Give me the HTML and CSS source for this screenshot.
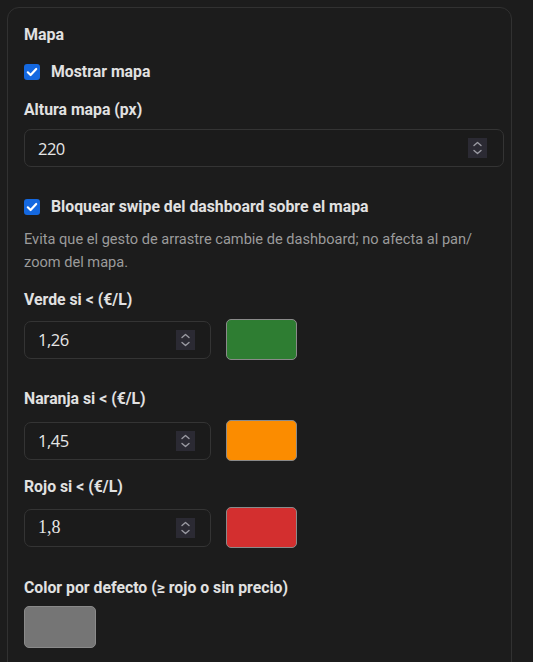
FILE: index.html
```html
<!DOCTYPE html>
<html lang="es">
<head>
<meta charset="utf-8">
<link rel="stylesheet" href="styles.css">
</head>
<body>
<div class="card">
  <div class="title">Mapa</div>

  <label class="check-row">
    <span class="checkbox"><svg viewBox="0 0 16 16" width="16" height="16"><path d="M3.8 8.3 L6.6 11 L12.2 5" fill="none" stroke="#fff" stroke-width="2.2" stroke-linecap="round" stroke-linejoin="round"/></svg></span>
    <span class="check-label">Mostrar mapa</span>
  </label>

  <div class="field f-altura">
    <div class="label">Altura mapa (px)</div>
    <div class="num wide"><span class="num-val">220</span><span class="spin"><svg viewBox="0 0 19 20" width="19" height="20"><path d="M6 7.5 L9.5 4.5 L13 7.5 M6 12.5 L9.5 15.5 L13 12.5" fill="none" stroke="#9a9aa2" stroke-width="1.4" stroke-linecap="round" stroke-linejoin="round"/></svg></span></div>
  </div>

  <label class="check-row check-2">
    <span class="checkbox"><svg viewBox="0 0 16 16" width="16" height="16"><path d="M3.8 8.3 L6.6 11 L12.2 5" fill="none" stroke="#fff" stroke-width="2.2" stroke-linecap="round" stroke-linejoin="round"/></svg></span>
    <span class="check-label">Bloquear swipe del dashboard sobre el mapa</span>
  </label>
  <p class="desc">Evita que el gesto de arrastre cambie de dashboard; no afecta al pan/ zoom del mapa.</p>

  <div class="field f-verde">
    <div class="label">Verde si &lt; (€/L)</div>
    <div class="row">
      <div class="num short"><span class="num-val">1,26</span><span class="spin"><svg viewBox="0 0 19 20" width="19" height="20"><path d="M6 7.5 L9.5 4.5 L13 7.5 M6 12.5 L9.5 15.5 L13 12.5" fill="none" stroke="#9a9aa2" stroke-width="1.4" stroke-linecap="round" stroke-linejoin="round"/></svg></span></div>
      <div class="swatch green"></div>
    </div>
  </div>

  <div class="field f-naranja">
    <div class="label">Naranja si &lt; (€/L)</div>
    <div class="row">
      <div class="num short"><span class="num-val">1,45</span><span class="spin"><svg viewBox="0 0 19 20" width="19" height="20"><path d="M6 7.5 L9.5 4.5 L13 7.5 M6 12.5 L9.5 15.5 L13 12.5" fill="none" stroke="#9a9aa2" stroke-width="1.4" stroke-linecap="round" stroke-linejoin="round"/></svg></span></div>
      <div class="swatch orange"></div>
    </div>
  </div>

  <div class="field f-rojo">
    <div class="label">Rojo si &lt; (€/L)</div>
    <div class="row">
      <div class="num short"><span class="num-val serif">1,8</span><span class="spin"><svg viewBox="0 0 19 20" width="19" height="20"><path d="M6 7.5 L9.5 4.5 L13 7.5 M6 12.5 L9.5 15.5 L13 12.5" fill="none" stroke="#9a9aa2" stroke-width="1.4" stroke-linecap="round" stroke-linejoin="round"/></svg></span></div>
      <div class="swatch red"></div>
    </div>
  </div>

  <div class="field f-defecto">
    <div class="label">Color por defecto (≥ rojo o sin precio)</div>
    <div class="row">
      <div class="swatch grey"></div>
    </div>
  </div>
</div>
</body>
</html>
```
FILE: styles.css
```css
html, body {
  margin: 0;
  padding: 0;
  background: #1c1c1c;
  height: 100%;
  overflow: hidden;
}
body {
  padding: 7px;
  font-family: Roboto, "Liberation Sans", sans-serif;
  color: #e1e1e1;
}
.card {
  min-height: 700px;
  border: 1px solid #313131;
  border-radius: 12px;
  padding: 16px 6px 16px 16px;
  box-sizing: border-box;
  width: 505px;
}
.title {
  font-size: 16px;
  font-weight: 700;
  line-height: 22px;
  margin-bottom: 16px;
}
.check-row {
  display: flex;
  align-items: center;
  gap: 11px;
  height: 20px;
}
.checkbox {
  width: 16px;
  height: 16px;
  border-radius: 3px;
  background: #1468e0;
  display: flex;
}
.check-label,
.label {
  font-size: 15.8px;
  font-weight: 700;
  line-height: 20px;
}
.field .label { margin-bottom: 9px; }
.f-altura { margin-top: 18px; }
.check-2 { margin-top: 30px; }
.desc {
  margin: 11px 0 0;
  font-size: 14.6px;
  line-height: 23px;
  color: #9b9b9b;
}
.f-verde { margin-top: 16px; }
.f-verde .label { margin-bottom: 9px; }
.f-naranja { margin-top: 29px; }
.f-naranja .label { margin-bottom: 11px; }
.f-rojo { margin-top: 16px; }
.f-rojo .label { margin-bottom: 10px; }
.f-defecto { margin-top: 30px; }
.f-defecto .label { margin-bottom: 8px; }
.row {
  display: flex;
  align-items: center;
  gap: 15px;
}
.num {
  height: 38px;
  border: 1px solid #343434;
  border-radius: 7px;
  background: #1b1b1b;
  box-sizing: border-box;
  display: flex;
  align-items: center;
  justify-content: space-between;
  padding: 0 15px 0 13px;
}
.num.wide { width: 480px; padding-right: 16px; }
.num.short { width: 187px; }
.num-val {
  font-family: "Open Sans", sans-serif;
  font-size: 16.5px;
  color: #e6e6e6;
  letter-spacing: -0.5px;
}
.num-val.serif {
  font-family: "Liberation Serif", serif;
  font-size: 18px;
  letter-spacing: 0;
}
.spin {
  width: 19px;
  height: 20px;
  background: #2b2a33;
  display: flex;
}
.swatch {
  width: 71px;
  height: 41px;
  border: 1px solid #8a8a8a;
  border-radius: 5px;
  box-sizing: border-box;
}
.green { background: #2e7d32; }
.orange { background: #fb8c00; }
.red { background: #d32f2f; }
.grey { background: #757575; width: 72px; height: 42px; }
```
